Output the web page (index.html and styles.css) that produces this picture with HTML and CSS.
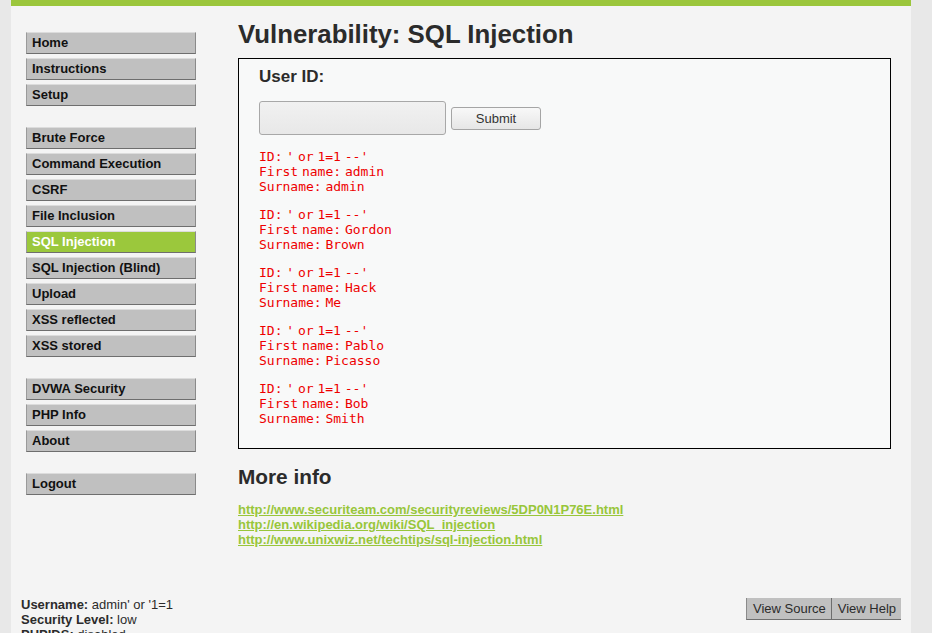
FILE: index.html
```html
<!DOCTYPE html>
<html>
<head>
<meta charset="utf-8">
<title>Vulnerability: SQL Injection</title>
<link rel="stylesheet" href="styles.css">
</head>
<body>
<div class="container">
  <div class="topbar"></div>
  <div class="page">
    <nav class="menu">
      <ul>
        <li><a href="#">Home</a></li>
        <li><a href="#">Instructions</a></li>
        <li><a href="#">Setup</a></li>
      </ul>
      <ul>
        <li><a href="#">Brute Force</a></li>
        <li><a href="#">Command Execution</a></li>
        <li><a href="#">CSRF</a></li>
        <li><a href="#">File Inclusion</a></li>
        <li class="selected"><a href="#">SQL Injection</a></li>
        <li><a href="#">SQL Injection (Blind)</a></li>
        <li><a href="#">Upload</a></li>
        <li><a href="#">XSS reflected</a></li>
        <li><a href="#">XSS stored</a></li>
      </ul>
      <ul>
        <li><a href="#">DVWA Security</a></li>
        <li><a href="#">PHP Info</a></li>
        <li><a href="#">About</a></li>
      </ul>
      <ul>
        <li><a href="#">Logout</a></li>
      </ul>
    </nav>
    <main class="main">
      <h1>Vulnerability: SQL Injection</h1>
      <div class="code-area">
        <h3>User ID:</h3>
        <form class="form-row">
          <input type="text" class="text-input" name="id">
          <button type="button" class="submit">Submit</button>
        </form>
        <div class="results">
          <pre>ID: ' or 1=1 --'
First name: admin
Surname: admin</pre>
          <pre>ID: ' or 1=1 --'
First name: Gordon
Surname: Brown</pre>
          <pre>ID: ' or 1=1 --'
First name: Hack
Surname: Me</pre>
          <pre>ID: ' or 1=1 --'
First name: Pablo
Surname: Picasso</pre>
          <pre>ID: ' or 1=1 --'
First name: Bob
Surname: Smith</pre>
        </div>
      </div>
      <h2>More info</h2>
      <ul class="links">
        <li><a href="#">http://www.securiteam.com/securityreviews/5DP0N1P76E.html</a></li>
        <li><a href="#">http://en.wikipedia.org/wiki/SQL_injection</a></li>
        <li><a href="#">http://www.unixwiz.net/techtips/sql-injection.html</a></li>
      </ul>
    </main>
  </div>
  <div class="footer">
    <div class="sysinfo">
      <div><b>Username:</b> admin' or '1=1</div>
      <div><b>Security Level:</b> low</div>
      <div><b>PHPIDS:</b> disabled</div>
    </div>
    <div class="view-buttons">
      <button type="button" class="view-btn">View Source</button>
      <button type="button" class="view-btn">View Help</button>
    </div>
  </div>
</div>
</body>
</html>
```
FILE: styles.css
```css
html, body {
  margin: 0;
  padding: 0;
}
body {
  background: #e8e8e8;
  font-family: "Liberation Sans", Arial, sans-serif;
  font-size: 13px;
  color: #2b2b2b;
  overflow: hidden;
}
.container {
  width: 900px;
  margin: 0 21px 0 11px;
  background: #f4f4f4;
  min-height: 633px;
}
.topbar {
  height: 6px;
  background: #9bc63c;
}
.page {
  display: flex;
}
.menu {
  width: 170px;
  margin: 26px 0 0 15px;
}
.menu ul {
  list-style: none;
  margin: 0 0 21px 0;
  padding: 0;
}
.menu li {
  margin: 0 0 4px 0;
}
.menu li:last-child {
  margin-bottom: 0;
}
.menu a {
  display: block;
  height: 20px;
  line-height: 20px;
  padding-left: 5px;
  background: #c0c0c0;
  border-top: 1px solid #dcdcdc;
  border-bottom: 1px solid #6e6e6e;
  border-left: 1px solid #9a9a9a;
  border-right: 1px solid #8a8a8a;
  color: #111;
  font-weight: bold;
  font-size: 13px;
  text-decoration: none;
}
.menu li.selected a {
  background: #9bc83c;
  color: #fff;
}
.main {
  margin-left: 42px;
  width: 653px;
}
h1 {
  margin: 13px 0 9px 0;
  font-size: 25.8px;
  line-height: 30px;
  font-weight: bold;
  color: #2b2b2b;
}
.code-area {
  border: 1px solid #000;
  background: #f8f9f9;
  padding: 8px 20px 9px 20px;
}
h3 {
  margin: 0;
  font-size: 17px;
  line-height: 20px;
  color: #2b2b2b;
}
.form-row {
  margin: 14px 0 0 0;
  display: flex;
  align-items: center;
  gap: 5px;
}
.text-input {
  box-sizing: border-box;
  width: 187px;
  height: 34px;
  margin: 0;
  border: 1px solid #a8a8a8;
  border-radius: 3px;
  background: linear-gradient(to bottom, #f1f1f1, #e8e8e8);
}
.submit {
  box-sizing: border-box;
  width: 90px;
  height: 23px;
  margin: 0;
  padding: 0;
  border: 1px solid #a5a5a5;
  border-radius: 3px;
  background: linear-gradient(to bottom, #f8f8f8, #e6e6e6);
  font-family: "Liberation Sans", Arial, sans-serif;
  font-size: 13px;
  color: #333;
}
.results {
  margin-top: 14px;
}
.results pre {
  margin: 0 0 13px 0;
  font-family: "DejaVu Sans Mono", monospace;
  font-size: 13px;
  line-height: 15px;
  word-spacing: -4px;
  color: #e00;
}
h2 {
  margin: 16px 0 13px 0;
  font-size: 20.8px;
  line-height: 24px;
  color: #2b2b2b;
}
.links {
  list-style: none;
  margin: 0;
  padding: 0;
}
.links li {
  line-height: 15px;
}
.links a {
  color: #98c63a;
  font-weight: bold;
  font-size: 13px;
  text-decoration: underline;
}
.footer {
  display: flex;
  justify-content: space-between;
  align-items: flex-start;
  margin-top: 50px;
  padding: 0 10px;
}
.sysinfo {
  line-height: 15px;
  color: #2b2b2b;
}
.view-buttons {
  display: flex;
  margin-top: 1px;
}
.view-btn {
  height: 22px;
  margin: 0;
  padding: 0 5px 0 6px;
  background: #c0c0c0;
  border: none;
  border-bottom: 1px solid #6e6e6e;
  border-left: 1px solid #8a8a8a;
  font-family: "Liberation Sans", Arial, sans-serif;
  font-size: 13px;
  color: #2b2b2b;
}
.view-btn + .view-btn {
  border-left: 1px solid #6e6e6e;
}
```
